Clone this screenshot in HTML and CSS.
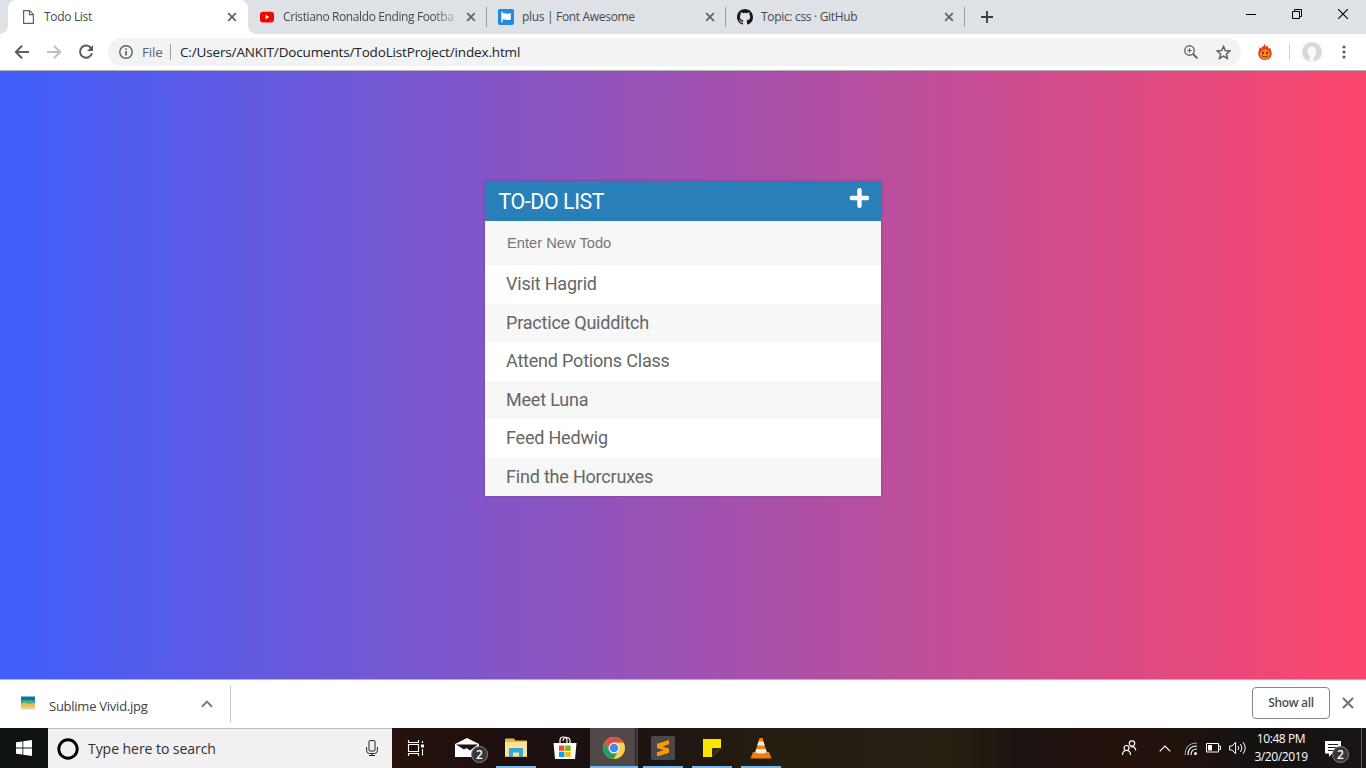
FILE: index.html
```html
<!DOCTYPE html>
<html lang="en">
<head>
<meta charset="utf-8">
<title>Todo List</title>
<link rel="stylesheet" href="styles.css">
</head>
<body>
<div class="screen">
  <div class="tabstrip">
    <div class="tab active">
      <svg class="fav" viewBox="0 0 16 16"><path d="M3.6 1.6h6l3.8 3.8v9H3.6zM9.4 1.8v3.8h3.8" fill="none" stroke="#5f6368" stroke-width="1.2"/></svg>
      <span class="tab-title">Todo List</span>
      <svg class="x" viewBox="0 0 10 10"><path d="M1.2 1.2l7.6 7.6M8.8 1.2L1.2 8.8"/></svg>
    </div>
    <div class="tab">
      <svg class="fav" viewBox="0 0 16 16"><rect x="1" y="2.7" width="14" height="10.8" rx="3" fill="#f00"/><path d="M6.6 5.8v4.4L10.2 8z" fill="#fff"/></svg>
      <span class="tab-title fade">Cristiano Ronaldo Ending Footba</span>
      <svg class="x" viewBox="0 0 10 10"><path d="M1.2 1.2l7.6 7.6M8.8 1.2L1.2 8.8"/></svg>
    </div>
    <div class="tab">
      <svg class="fav" viewBox="0 0 16 16"><rect width="16" height="16" rx="1.8" fill="#228ae6"/><path d="M4 3.2v9.6" stroke="#fff" stroke-width="1.3" stroke-linecap="round"/><path d="M4 4.6c3-1.2 4.5 1 8.8-.4v6.2c-4 1.500-5.800-.8-8.800.3z" fill="#fff"/></svg>
      <span class="tab-title">plus | Font Awesome</span>
      <svg class="x" viewBox="0 0 10 10"><path d="M1.2 1.2l7.6 7.6M8.8 1.2L1.2 8.8"/></svg>
    </div>
    <div class="tab">
      <svg class="fav" viewBox="0 0 16 16"><path fill="#191717" d="M8 0C3.580 0 0 3.580 0 8c0 3.540 2.290 6.530 5.470 7.590.4.070.55-.17.55-.38v-1.490c-2.010.37-2.530-.49-2.690-.94-.09-.23-.48-.94-.82-1.130-.28-.15-.68-.52-.01-.53.63-.01 1.080.58 1.230.82.72 1.210 1.870.87 2.330.66.070-.52.28-.87.51-1.070-1.780-.2-3.640-.89-3.640-3.950 0-.87.31-1.590.82-2.150-.08-.2-.36-1.020.08-2.120 0 0 .67-.21 2.200.82a7.500 7.500 0 014 0c1.530-1.040 2.200-.82 2.200-.82.44 1.100.16 1.920.08 2.120.51.56.82 1.270.82 2.150 0 3.070-1.870 3.750-3.650 3.950.29.25.54.73.54 1.480v2.190c0 .21.15.46.55.38A8 8 0 0016 8c0-4.420-3.580-8-8-8z"/></svg>
      <span class="tab-title">Topic: css · GitHub</span>
      <svg class="x" viewBox="0 0 10 10"><path d="M1.2 1.2l7.6 7.6M8.8 1.2L1.2 8.8"/></svg>
    </div>
    <svg class="newtab" viewBox="0 0 12 12"><path d="M6 0v12M0 6h12" stroke="#3c4043" stroke-width="1.900"/></svg>
    <div class="wincontrols">
      <svg width="10" height="10" viewBox="0 0 10 10"><path d="M0 5.500h10" stroke="#000"/></svg>
      <svg width="10" height="10" viewBox="0 0 10 10" fill="none" stroke="#000"><path d="M.5 2.500h7v7h-7zM2.500 2.500v-2h7v7h-2"/></svg>
      <svg width="10" height="10" viewBox="0 0 10 10"><path d="M0 0l10 10M10 0L0 10" stroke="#000" stroke-width="1.100"/></svg>
    </div>
  </div>
  <div class="toolbar">
    <svg class="nav" viewBox="0 0 16 16"><path d="M15 8H2M8 1.800L1.900 8 8 14.200" fill="none" stroke="#5a5e63" stroke-width="2"/></svg>
    <svg class="nav" viewBox="0 0 16 16"><path d="M1 8h13M8 1.800L14.100 8 8 14.200" fill="none" stroke="#bcbec1" stroke-width="2"/></svg>
    <svg class="nav" viewBox="0 0 16 16"><path d="M13.200 4.200A6.100 6.100 0 1 0 14 9.300" fill="none" stroke="#5a5e63" stroke-width="2"/><path d="M15 1v6H9z" fill="#5a5e63"/></svg>
    <div class="omnibox">
      <svg class="info" viewBox="0 0 14 14"><circle cx="7" cy="7" r="6.200" fill="none" stroke="#5f6368" stroke-width="1.400"/><path d="M7 6v4.500M7 3.300v1.500" stroke="#5f6368" stroke-width="1.700"/></svg>
      <span class="scheme">File</span><i class="bar"></i>
      <span class="url">C:/Users/ANKIT/Documents/TodoListProject/index.html</span>
      <svg class="mag" viewBox="0 0 14 14" fill="none" stroke="#5f6368"><circle cx="5.500" cy="5.500" r="4.700" stroke-width="1.400"/><path d="M9 9l4.500 4.500" stroke-width="1.900"/><path d="M3.200 5.500h4.600M5.500 3.200v4.600"/></svg>
      <svg class="star" viewBox="0 0 14 14"><path d="M7 1.300l1.700 3.900 4.200.4-3.200 2.800.95 4.200L7 10.400l-3.650 2.200.95-4.200L1.100 5.600l4.200-.4z" fill="none" stroke="#5f6368" stroke-width="1.400"/></svg>
    </div>
    <svg class="flame" viewBox="0 0 14 16"><path d="M.3 9.500C.3 7 1.500 5 1.300 3.200L3.500 4.500 4.300 2l1 .8L6.300 0l1.900 2.800L9.800 1.500l.6 3 2-.8c-.2 2 1.300 3.500 1.300 5.800 0 4-2.700 6.400-6.700 6.400S.3 13.500.3 9.500z" fill="#e8401a"/><circle cx="7" cy="10.400" r="4.900" fill="#f9901e"/><path d="M5 7.800v2.200M9 7.800v2.200" stroke="#4b1d08" stroke-width="1.500"/><path d="M3.900 11.500c1.800 2 4.400 2 6.200 0" fill="none" stroke="#6b2d08" stroke-width="1.100"/></svg>
    <i class="toolsep"></i>
    <svg class="avatar" viewBox="0 0 20 20"><circle cx="10" cy="10" r="10" fill="#d9d9da"/><path d="M10 4.500c-4 0-5.200 4-4 7 .6 1.500 1.900 2 2 3.300l-.5 4 2.500 1 2-.5-.3-4.500c1.800-.8 2.500-3 2.400-5.300-.1-3-1.600-5-4.100-5z" fill="#f8fafa"/></svg>
    <svg class="dots" viewBox="0 0 4 14" fill="#5a5e63"><circle cx="2" cy="2" r="1.600"/><circle cx="2" cy="7" r="1.600"/><circle cx="2" cy="12" r="1.600"/></svg>
  </div>
  <main class="page">
    <section class="todo">
      <h1>TO-DO LIST<svg viewBox="0 0 20 20"><path d="M10.500 2.300v15.400M2.800 10h15.400" stroke="#fff" stroke-width="4.400" stroke-linecap="round"/></svg></h1>
      <input type="text" placeholder="Enter New Todo">
      <ul>
        <li>Visit Hagrid</li><li>Practice Quidditch</li><li>Attend Potions Class</li><li>Meet Luna</li><li>Feed Hedwig</li><li>Find the Horcruxes</li>
      </ul>
    </section>
  </main>
  <div class="downloads">
    <svg class="thumb" viewBox="0 0 14 14"><path fill="#176ca9" d="M0 .5h14v6H0z"/><path fill="#1a9eb5" d="M0 4h14v4H0z"/><path fill="#52b765" d="M1 6l3-2 2 2 3-2 4 2v2H1z"/><path fill="#edbd55" d="M0 7.500l4-.5 4 1 6-1v4H0z"/><path fill="#e0cfb5" d="M0 10.800h14v2.500H0z"/></svg>
    <span class="file">Sublime Vivid.jpg</span>
    <svg class="chev" viewBox="0 0 10 7"><path d="M.6 5.900L5 1.400l4.400 4.500" fill="none" stroke="#777a7d" stroke-width="1.700"/></svg>
    <button>Show all</button>
    <svg class="x" viewBox="0 0 10 10"><path d="M.8.8l8.400 8.400M9.200.8L.8 9.200"/></svg>
  </div>
  <div class="taskbar">
    <div class="start"><svg width="16" height="16" viewBox="0 0 16 16" fill="#fff"><path d="M0 2.300L6.500 1.400v6.200H0zM7.300 1.300L16 0v7.600H7.300zM0 8.400h6.500v6.200L0 13.700zM7.300 8.400H16V16l-8.700-1.300z"/></svg></div>
    <div class="search">
      <svg class="cortana" viewBox="0 0 22 22"><circle cx="11" cy="11" r="9.200" fill="none" stroke="#000" stroke-width="2.900"/></svg>
      <span>Type here to search</span>
      <svg class="mic" viewBox="0 0 12 16" fill="none" stroke="#222"><rect x="3" y=".6" width="6" height="10.400" rx="1"/><path d="M.6 7v3.500q0 3 3 3h4.800q3 0 3-3V7M6 13.500V16M3 15.500h6"/></svg>
    </div>
    <div class="apps">
      <div class="app first"><svg width="18" height="16" viewBox="0 0 18 16" fill="none" stroke="#fff"><path d="M1.500 0v2.500h10V0M1.500 16v-2.500h10V16M1.500 4.500h10v7h-10zM15.500 1v2M15.500 9v6.500" stroke-width="1.100"/><path d="M14 4.500h3v3h-3z" fill="#fff" stroke="none"/></svg></div>
      <div class="app mail"><svg width="24" height="20" viewBox="0 0 24 20"><path d="M0 6L12 0l12 6v13H0z" fill="#fff"/><path d="M1 6.500h22l-8 6-3.500-2.500-2.500 1.500z" fill="#24110d"/></svg><b class="badge">2</b></div>
      <div class="app open"><svg width="22" height="20" viewBox="0 0 22 20"><path d="M0 1.500Q0 .5 1 .5h8l1.500 2H22V19H0z" fill="#e8b93f"/><path d="M0 4h22v14H0z" fill="#ffe394"/><path d="M4 11q0-1 1-1h12q1 0 1 1v8h-4v-4.500H8V19H4z" fill="#31a9df"/></svg></div>
      <div class="app"><svg width="24" height="24" viewBox="0 0 24 24"><path d="M7 8V4.500Q7 1 10 1h1q3 0 3 3.500V8M10 5q0-3.500 3.500-3.500T17 5v3" fill="none" stroke="#fff" stroke-width="1.200"/><path d="M.5 7h23L22 23H2z" fill="#fff"/><path fill="#f25022" d="M6 9.500h5.400v5.400H6z"/><path fill="#7fba00" d="M12.200 9.500h5.400v5.400h-5.400z"/><path fill="#00a4ef" d="M6 15.700h5.400V21H6z"/><path fill="#ffb900" d="M12.200 15.700h5.400V21h-5.400z"/></svg></div>
      <div class="app open current"><svg width="24" height="24" viewBox="0 0 24 24"><circle cx="12" cy="12" r="11" fill="#fccf44"/><path d="M2.500 6.500A11 11 0 0 0 11.500 23l5-8.500L12 12 7 14z" fill="#229e5d"/><path d="M12 6.500h9.500a11 11 0 0 0-19 0L7.200 14.500z" fill="#de4f42"/><circle cx="12" cy="12" r="5.500" fill="#f4f4f4"/><circle cx="12" cy="12" r="4.300" fill="#4688f1"/></svg></div>
      <div class="app open"><svg width="24" height="24" viewBox="0 0 24 24"><rect width="24" height="24" rx="2" fill="#48484a"/><path d="M18 4v4.200L11.500 10.500 18 12.500v4.300L6 20.500v-4.200l6.500-2.100L6 12V7.800z" fill="#ff9800"/></svg></div>
      <div class="app open"><svg width="18" height="18" viewBox="0 0 18 18"><path d="M0 0h18v18H0z" fill="#fee500"/><path d="M9 9h9l-9 9z" fill="#2b2926"/><path d="M18 9v9H9z" fill="#231b12"/></svg></div>
      <div class="app open"><svg width="22" height="24" viewBox="0 0 22 24"><path d="M3 16h16l2.500 6.500H.5z" fill="#f07c12"/><path d="M9.500 2h3l5 16.500q-6.500 3-13 0z" fill="#ef8016"/><path d="M8.600 5.500h4.800l1.200 4H7.300zM6.200 13h9.600l1 3.500q-5.800 2.200-11.600 0z" fill="#f0eeeb"/></svg></div>
    </div>
    <div class="tray">
      <svg class="people" viewBox="0 0 16 16" fill="none" stroke="#fff" stroke-width="1.200"><circle cx="5.500" cy="8" r="2.500"/><path d="M1.500 15q0-4.500 4-4.500t4 4.500"/><circle cx="11" cy="3.500" r="2.700"/><path d="M9.500 7q4.500-1.500 5.300 3.500"/></svg>
      <svg class="up" viewBox="0 0 12 7"><path d="M.7 6.300L6 1l5.300 5.300" fill="none" stroke="#fff" stroke-width="1.200"/></svg>
      <svg class="wifi" viewBox="0 0 13 13" fill="none"><path d="M1 13Q1 1 13 1" stroke="#aaa"/><path d="M4 13q0-9 9-9M7 13q0-6 6-6" stroke="#fff" stroke-width="1.100"/><circle cx="11.500" cy="11.500" r="1.500" fill="#fff"/></svg>
      <svg class="battery" viewBox="0 0 15 10"><path d="M.5.500h12v8.500H.5zM12.500 3h2v3.500h-2" fill="none" stroke="#fff"/><path d="M2 2h4v5.500H2z" fill="#fff"/></svg>
      <svg class="vol" viewBox="0 0 17 14" fill="none" stroke="#fff"><path d="M.6 5h2.500l3.500-3.800v11.600L3.100 9H.6zM9 5q1.500 2 0 4M11.500 3q3 4 0 8M14 1.200q4.500 5.800 0 11.600"/></svg>
      <div class="clock"><span>10:48 PM</span><span>3/20/2019</span></div>
      <div class="action"><svg width="16" height="16" viewBox="0 0 16 16"><path d="M0 0h16v12.500H7L4 16v-3.500H0z" fill="#fff"/><path d="M3 3.500h10M3 6.500h10M3 9.500h6" stroke="#24201e"/></svg><b class="badge">2</b></div>
    </div>
  </div>
</div>
</body>
</html>
```
FILE: styles.css
```css
* { box-sizing: border-box; }
body { margin: 0; font-family: "Open Sans", sans-serif; overflow: hidden; }
svg { display: block; flex: none; }
.screen { width: 1366px; height: 768px; display: flex; flex-direction: column; background: #fff; }

.tabstrip { height: 34px; flex: none; background: #dee1e6; display: flex; padding-left: 8px; align-items: stretch; }
.tab { width: 239px; display: flex; align-items: center; padding: 0 10px 0 12px; position: relative; }
.tab::after { content: ""; position: absolute; right: -1px; top: 7px; width: 1px; height: 20px; background: #9a9da2; }
.tab.active { background: #fff; border-radius: 8px 8px 0 0; width: 240px; margin-right: -1px; padding-right: 11px; }
.tab.active::after { left: -8px; right: auto; top: auto; bottom: 0; width: 256px; height: 8px; background: radial-gradient(circle at 0 0, transparent 7.5px, #fff 8px) 0 0 / 8px 8px no-repeat, radial-gradient(circle at 100% 0, transparent 7.5px, #fff 8px) 100% 0 / 8px 8px no-repeat; }
.fav { width: 16px; height: 16px; margin-right: 8px; }
.tab-title { flex: 1; font-size: 12px; color: #45494d; white-space: nowrap; margin-right: 9px; line-height: 18px; letter-spacing: -.32px; }
.tab-title.fade { letter-spacing: -.39px; -webkit-mask-image: linear-gradient(90deg, #000 86%, rgba(0,0,0,.2)); mask-image: linear-gradient(90deg, #000 86%, rgba(0,0,0,.2)); }
.x { width: 10px; height: 10px; fill: none; stroke: #5f6368; stroke-width: 1.7; }
.newtab { width: 12px; height: 12px; margin: 11px 0 0 17px; }
.wincontrols { margin-left: auto; padding: 9px 18px 0 0; display: flex; gap: 36px; }

.toolbar { height: 37px; flex: none; border-bottom: 1px solid #b2b1b1; display: flex; align-items: center; padding: 0 20px 0 14px; }
.nav { width: 16px; height: 16px; margin-right: 16px; }
.omnibox { width: 1133px; height: 28px; border-radius: 14px; background: #f1f3f4; margin-left: -2px; display: flex; align-items: center; padding: 0 10px 0 11px; font-size: 13.5px; }
.info { width: 14px; height: 14px; }
.scheme { color: #5f6368; margin-left: 9px; width: 21px; letter-spacing: -.2px; }
.bar { width: 1px; height: 16px; background: #9a9da1; margin: 0 9px 0 7px; }
.url { color: #202124; letter-spacing: -.15px; }
.mag { width: 14px; height: 14px; margin-left: auto; margin-right: 18px; }
.star { width: 15px; height: 15px; }
.flame { width: 14px; height: 16px; margin-left: 17px; }
.toolsep { width: 1px; height: 16px; background: #cccdce; margin: 0 12px 0 17px; }
.avatar { width: 20px; height: 20px; }
.dots { width: 4px; height: 14px; margin-left: auto; }

.page { height: 608px; flex: none; background: linear-gradient(to right, #3f5efb, #fc466b); padding-top: 110px; }
.todo { width: 396px; margin: 0 auto; background: #f7f7f7; box-shadow: 0 0 3px rgba(0,0,0,.2); font-family: Roboto, sans-serif; }
.todo h1 { margin: 0; height: 40px; background: #2980b9; color: #fff; font-size: 21.3px; letter-spacing: -.38px; font-weight: 400; padding: 1px 12px 0 13.5px; display: flex; justify-content: space-between; line-height: 40px; }
.todo h1 svg { width: 20px; height: 20px; margin-top: 6px; }
.todo input { display: block; width: 100%; height: 44px; border: 0; background: #f7f7f7; padding: 0 22px; font: 14.7px "Liberation Sans", Arial, sans-serif; outline: 0; }
.todo input::placeholder { color: #757575; opacity: 1; }
.todo ul { list-style: none; margin: 0; padding: 0; }
.todo li { height: 38.5px; line-height: 38.5px; background: #fff; color: #666; font-size: 18px; letter-spacing: -.2px; padding-left: 21px; }
.todo li:nth-child(2n) { background: #f7f7f7; }

.downloads { height: 49px; flex: none; border-top: 1px solid #b6b4b7; display: flex; align-items: center; padding: 0 12px 2px 21px; position: relative; }
.downloads::after { content: ""; position: absolute; left: 230px; top: 6px; width: 1px; height: 36px; background: #c4c6c9; }
.thumb { width: 14px; height: 14px; }
.file { font-size: 13px; color: #3c4043; margin-left: 14px; width: 152px; letter-spacing: -.25px; padding-top: 5px; }
.chev { width: 12px; height: 8px; margin-top: 2px; }
.downloads button { margin: 0 12px 0 auto; width: 78px; height: 32px; border: 1px solid #858689; border-radius: 4px; background: #fff; font: 600 12px "Open Sans", sans-serif; letter-spacing: -.3px; color: #4c5055; padding: 0 0 1px; }
.downloads .x { width: 12px; height: 12px; stroke: #707477; stroke-width: 1.7; }

.taskbar { height: 40px; flex: none; display: flex; background: linear-gradient(90deg, #101410 0 48px, #26110b 392px, #1d0f0e 510px, #191111 600px, #271e12 780px, #261f12 950px, #1b1310 1020px, #24110d 1110px, #21120c 1170px, #141111 1260px, #191514 1366px); }
.start { width: 48px; display: grid; place-items: center; }
.search { width: 344px; background: #f1f1f1; border-top: 1px solid #bdbdbd; display: flex; align-items: center; padding: 0 14px 0 9px; font-size: 14px; color: #303030; }
.cortana { width: 22px; height: 22px; margin-right: 9px; }
.search span { letter-spacing: -.05px; }
.mic { width: 12px; height: 16px; margin: -2px 0 0 auto; }
.apps { display: flex; }
.app { width: 48px; margin-right: 1px; display: grid; place-items: center; position: relative; }
.first { margin-right: 3px; }
.open::after { content: ""; position: absolute; left: 4px; right: 4px; bottom: 0; height: 2px; background: #76b9ed; }
.current { background: linear-gradient(90deg, #514948 45px, #292120 45px 46px, #443c3b 46px); }
.current::after { left: 0; right: 0; }
.badge { position: absolute; width: 17px; height: 17px; border: 1px solid #858585; border-radius: 50%; background: #373536; color: #fff; font-size: 12px; line-height: 15px; text-align: center; font-weight: 600; }
.mail .badge { left: 28px; top: 18px; }
.tray { margin-left: auto; display: flex; align-items: center; }
.people { width: 16px; height: 16px; margin-right: 22px; }
.up { width: 12px; height: 7px; margin-right: 13px; }
.wifi { width: 13px; height: 13px; margin-right: 9px; }
.battery { width: 15px; height: 10px; margin-right: 8px; }
.vol { width: 17px; height: 14px; margin-right: 6px; }
.clock { width: 58px; display: flex; flex-direction: column; align-items: center; color: #fff; font-size: 12px; line-height: 18px; letter-spacing: -.4px; white-space: nowrap; }
.action { position: relative; width: 41px; height: 40px; margin-left: 15px; padding-top: 13px; }
.action .badge { left: 7px; top: 18px; }
.action::after { content: ""; position: absolute; right: 4px; top: 0; width: 1px; height: 40px; background: #5b5755; }
```
